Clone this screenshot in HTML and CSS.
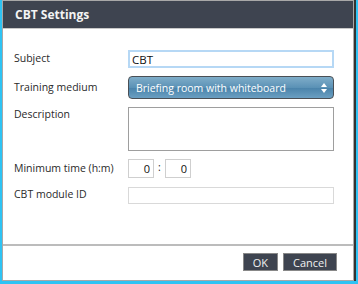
FILE: index.html
```html
<!doctype html>
<html lang="en">

<head>
  <title>CBT Settings</title>
  <link rel="stylesheet" href="styles.css">
</head>

<body>
  <div class="dialog">
    <div class="dialog-header">CBT Settings</div>
    <form class="dialog-body">
      <label class="field-label" for="subject">Subject</label>
      <input class="text-input focused" type="text" id="subject" value="CBT">

      <label class="field-label" for="medium">Training medium</label>
      <div class="select-box" id="medium">
        <span>Briefing room with whiteboard</span>
        <svg class="select-arrows" width="6" height="10" viewBox="0 0 6 10">
          <path d="M3 0 L6 4 L0 4 Z M0 6 L6 6 L3 10 Z" fill="#fff" />
        </svg>
      </div>

      <label class="field-label top" for="description">Description</label>
      <textarea class="text-area" id="description"></textarea>

      <label class="field-label" for="hours">Minimum time (h:m)</label>
      <div class="time-group">
        <input class="time-input" type="text" id="hours" value="0">
        <span class="colon">:</span>
        <input class="time-input" type="text" id="minutes" value="0">
      </div>

      <label class="field-label" for="moduleId">CBT module ID</label>
      <input class="text-input plain" type="text" id="moduleId">
    </form>
    <div class="dialog-footer">
      <button type="button" class="btn">OK</button>
      <button type="button" class="btn">Cancel</button>
    </div>
  </div>
</body>

</html>
```

FILE: styles.css
```css
body {
  margin: 0;
  padding: 0 2px 0 2px;
  background-color: #2ec3f4;
  font-family: "Open Sans", "DejaVu Sans", sans-serif;
  font-size: 10.5px;
  color: #222;
}

.dialog {
  width: 350px;
  height: 279px;
  background-color: #fff;
  border: 1px solid #a8a8a8;
  box-shadow: 1px 1px 0 1px #333;
  display: flex;
  flex-direction: column;
}

.dialog-header {
  height: 27px;
  line-height: 27px;
  padding-left: 12px;
  background-color: #3e4450;
  border-bottom: 1px solid #c8c8c8;
  color: #f4f4f4;
  font-weight: bold;
  font-size: 12px;
}

.dialog-body {
  display: grid;
  grid-template-columns: 114px 206px;
  grid-template-rows: 18px 23px 44px 19px 18px;
  row-gap: 8px;
  align-items: center;
  padding: 21px 0 0 11px;
  flex: 1;
}

.field-label {
  color: #2a2a2a;
  line-height: 14px;
  margin-top: -2px;
}

.field-label.top {
  align-self: start;
  margin-top: 0;
}

.text-input {
  box-sizing: border-box;
  height: 18px;
  width: 206px;
  margin: 0;
  padding: 0 3px;
  font-family: inherit;
  font-size: 11px;
  color: #111;
  background: #fff;
  outline: none;
}

.text-input.focused {
  border: 2px solid #b6d8f5;
  padding: 0 2px;
  font-size: 11.5px;
}

.text-input.plain {
  border: 1px solid #d9d9d9;
  height: 17px;
}

.select-box {
  box-sizing: border-box;
  height: 23px;
  width: 206px;
  display: flex;
  align-items: center;
  justify-content: space-between;
  padding: 0 6px 0 7px;
  border: 1px solid #4a4f55;
  border-radius: 4px;
  background: linear-gradient(#7fadc9, #5b92b6 50%, #4a83aa 52%, #6a9fc2);
  color: #fff;
  font-size: 10.5px;
}

.text-area {
  box-sizing: border-box;
  width: 206px;
  height: 44px;
  margin: 0;
  border: 1px solid #9e9e9e;
  resize: none;
  align-self: start;
}

.time-group {
  display: flex;
  align-items: center;
}

.time-input {
  flex: none;
  box-sizing: border-box;
  width: 26px;
  height: 19px;
  margin: 0;
  padding: 0 3px;
  border: 1px solid #cfcfcf;
  text-align: right;
  font-family: inherit;
  font-size: 11px;
  color: #111;
}

.colon {
  flex: none;
  width: 11px;
  text-align: center;
  position: relative;
  top: -2px;
}

.dialog-footer {
  height: 36px;
  border-top: 2px solid #bcbcbc;
  display: flex;
  justify-content: flex-end;
  align-items: flex-start;
  gap: 5px;
  padding: 7px 16px 0 0;
  box-sizing: border-box;
}

.btn {
  height: 18px;
  padding: 0 9px;
  background-color: #3e4450;
  color: #f0f0f0;
  border: 1px solid #888;
  font-family: inherit;
  font-size: 11px;
  cursor: pointer;
}
```
